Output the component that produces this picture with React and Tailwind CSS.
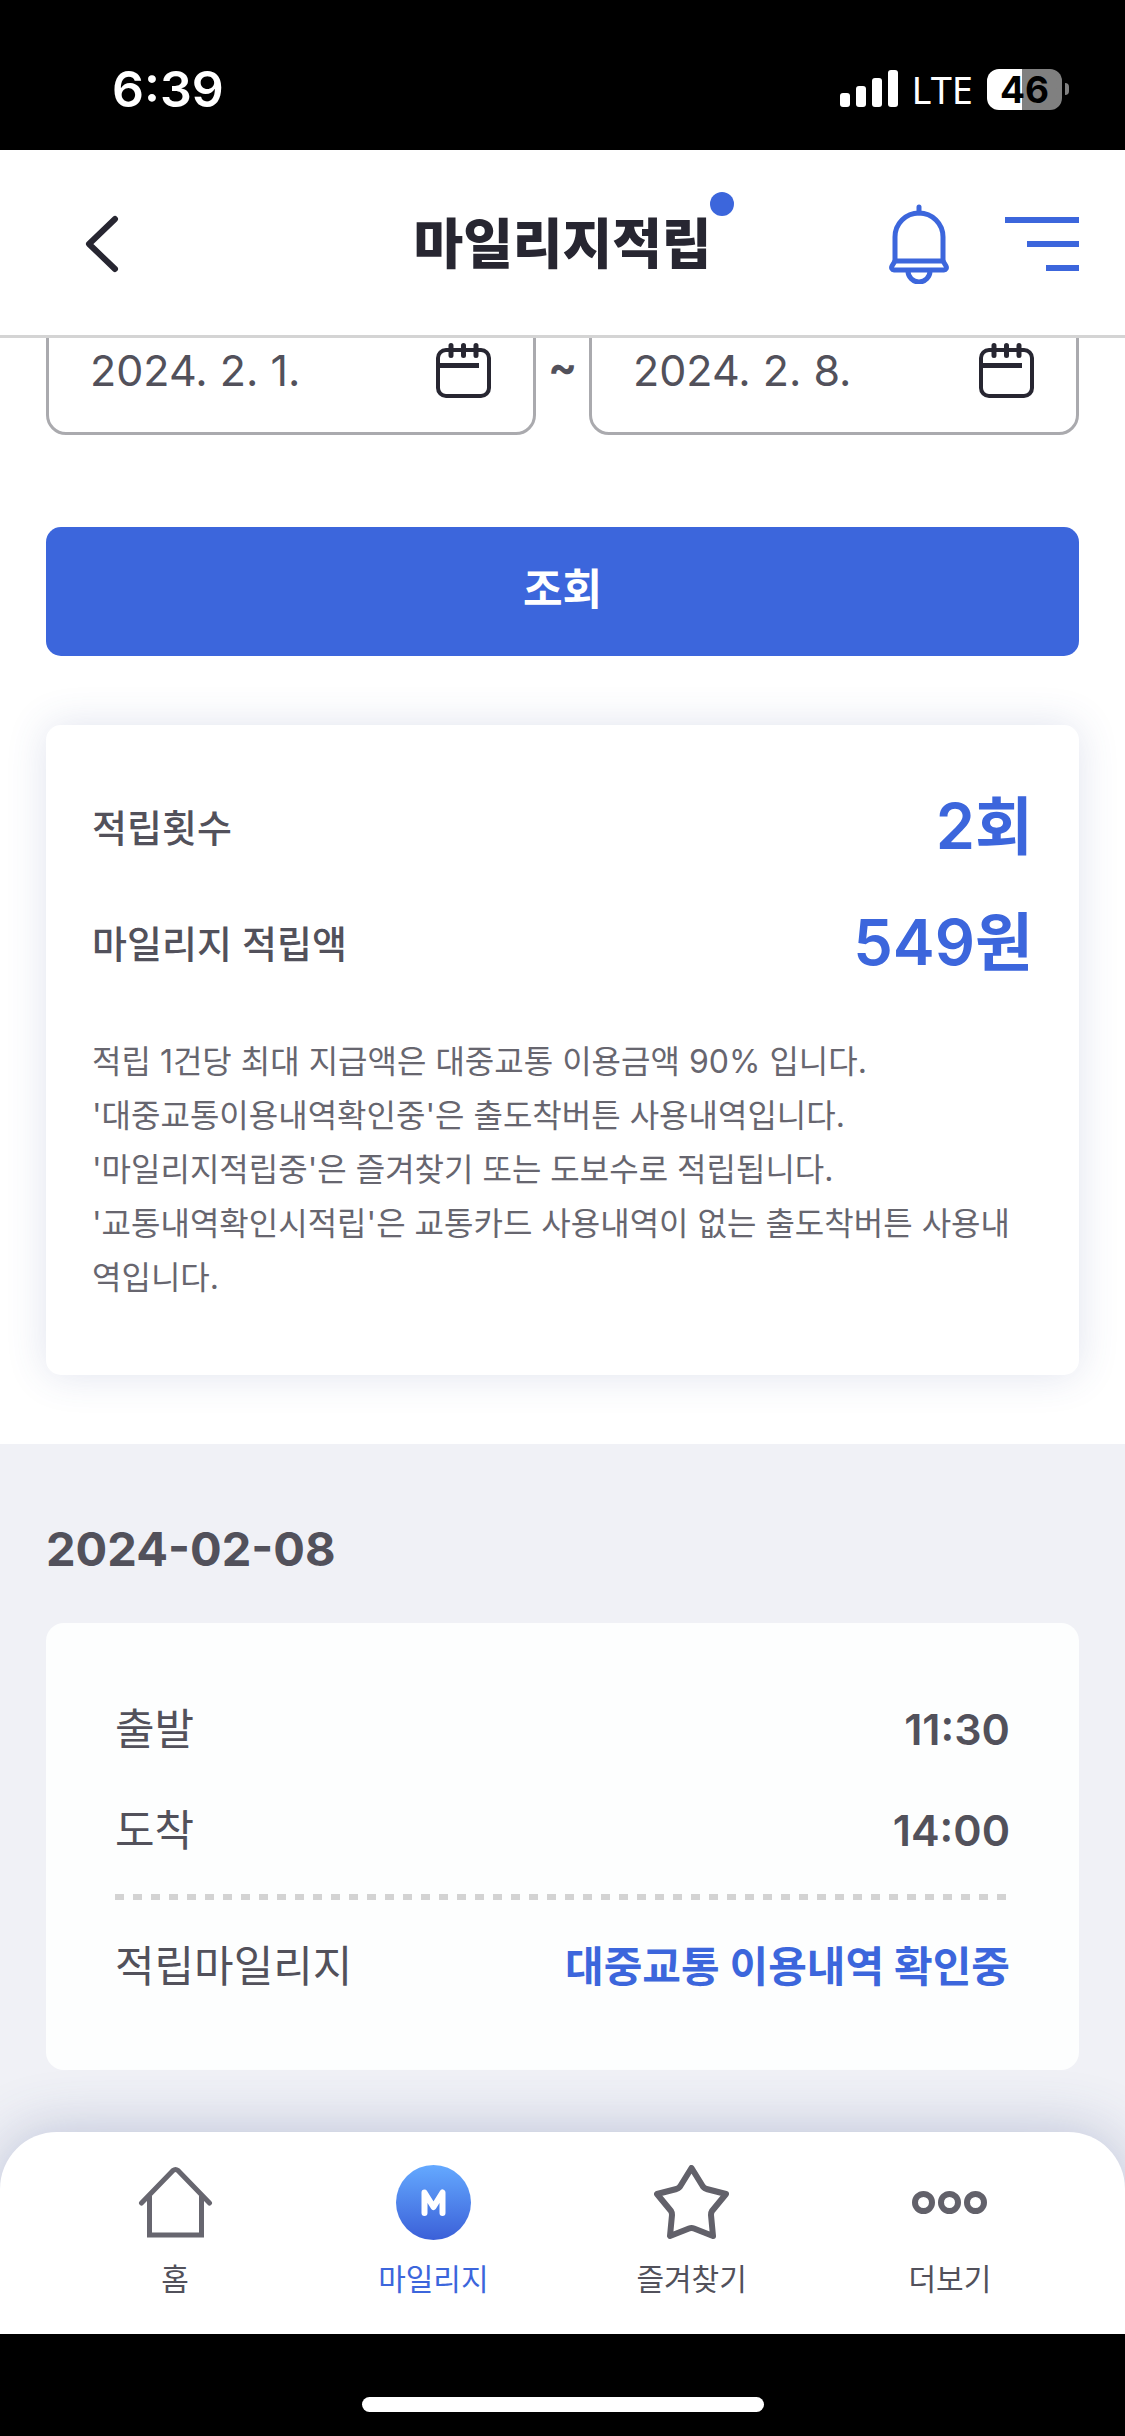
import { useState } from 'react';

const NOTICES = [
  '적립 1건당 최대 지급액은 대중교통 이용금액 90% 입니다.',
  "'대중교통이용내역확인중'은 출도착버튼 사용내역입니다.",
  "'마일리지적립중'은 즐겨찾기 또는 도보수로 적립됩니다.",
  "'교통내역확인시적립'은 교통카드 사용내역이 없는 출도착버튼 사용내역입니다.",
];

const HISTORY = [
  { date: '2024-02-08', departure: '11:30', arrival: '14:00', mileage: '대중교통 이용내역 확인중' },
];

const TABS = [
  { label: '홈', icon: HomeIcon },
  { label: '마일리지', icon: MileageIcon, active: true },
  { label: '즐겨찾기', icon: StarIcon },
  { label: '더보기', icon: MoreIcon },
];

export default function App() {
  const [from, setFrom] = useState('2024. 2. 1.');
  const [to, setTo] = useState('2024. 2. 8.');

  return (
    <div lang="ko" className="flex min-h-screen flex-col bg-white font-['Inter','Noto_Sans_CJK_KR',sans-serif] text-[#52515b]">
      <div className="sticky top-0 z-20">
        <StatusBar />
        <Header title="마일리지적립" />
      </div>

      {/* first row scrolls under the sticky header */}
      <main className="-mt-8 flex flex-1 flex-col">
        <section className="px-[46px] pb-[69px]">
          <form onSubmit={(e) => e.preventDefault()}>
            <div className="flex items-center">
              <DateField label="시작일" value={from} onChange={setFrom} />
              <span className="w-[53px] pb-2 text-center text-[43px] font-bold">~</span>
              <DateField label="종료일" value={to} onChange={setTo} />
            </div>
            <button type="submit" className="mt-[92px] h-[129px] w-full rounded-[15px] bg-[#3c66dc] pb-1 text-[43px] font-bold text-white">
              조회
            </button>
          </form>

          <div className="mt-[69px] rounded-[15px] bg-white px-[46px] pt-[45px] pb-[70px] shadow-[0_0_40px_rgba(60,80,150,0.16)]">
            <dl>
              <SummaryRow label="적립횟수" value="2회" />
              <SummaryRow label="마일리지 적립액" value="549원" />
            </dl>
            <div className="mt-[33px] text-[32px] leading-[54px] text-[#67666f]">
              {NOTICES.map((text) => (
                <p key={text}>{text}</p>
              ))}
            </div>
          </div>
        </section>

        <section className="flex-1 bg-[#f0f1f6] px-[46px] pt-[70px] pb-[120px]">
          {HISTORY.map((item) => (
            <HistoryCard key={item.date} item={item} />
          ))}
        </section>
      </main>

      <BottomNav />
    </div>
  );
}

function StatusBar() {
  return (
    <div className="flex h-[150px] items-center justify-between bg-black pt-7 pr-14 pl-28 text-white">
      <span className="text-[50px] font-semibold">6:39</span>
      <div className="flex items-center gap-[14px]">
        <svg width="58" height="38" viewBox="0 0 58 38" fill="currentColor" aria-hidden="true">
          <rect x="0" y="23" width="10" height="14" rx="3" />
          <rect x="16" y="16" width="10" height="21" rx="3" />
          <rect x="32" y="8" width="10" height="29" rx="3" />
          <rect x="48" y="0" width="10" height="37" rx="3" />
        </svg>
        <span className="font-['Noto_Sans',sans-serif] text-[38px] leading-none">LTE</span>
        <div className="flex items-center gap-[3px]">
          <div className="flex h-[41px] w-[75px] items-center justify-center rounded-xl bg-linear-to-r from-white from-47% to-[#808080] to-47% text-[37px] leading-none font-bold text-black">
            46
          </div>
          <div className="h-3 w-1 rounded-r-full bg-[#808080]" />
        </div>
      </div>
    </div>
  );
}

function Header({ title }) {
  return (
    <header className="grid h-[188px] grid-cols-[1fr_auto_1fr] items-center border-b-[3px] border-[#d4d4d4] bg-white px-[46px] pt-[3px]">
      <button type="button" aria-label="뒤로" className="ml-9 flex w-12 items-center justify-start">
        <svg width="40" height="60" viewBox="0 0 40 60" fill="none" stroke="#272631" strokeWidth="6" strokeLinecap="round" strokeLinejoin="round">
          <path d="M33 5 L7 30 L33 55" />
        </svg>
      </button>
      <h1 className="relative text-[54px] font-black text-[#272631]">
        {title}
        <span className="absolute -top-3 -right-[22px] h-6 w-6 rounded-full bg-[#3c66dc]" />
      </h1>
      <div className="flex items-center justify-end gap-[56px] text-[#3c66dc]">
        <button type="button" aria-label="알림">
          <BellIcon />
        </button>
        <button type="button" aria-label="메뉴">
          <svg width="74" height="54" viewBox="0 0 74 54" fill="currentColor">
            <path d="M0 0h74v6H0zM22 24h52v6H22zM41 48h33v6H41z" />
          </svg>
        </button>
      </div>
    </header>
  );
}

function DateField({ label, value, onChange }) {
  return (
    <div className="flex h-[129px] min-w-0 flex-1 items-center rounded-[20px] border-[3px] border-[#aaaaae] px-[41px]">
      <input
        type="text"
        aria-label={label}
        value={value}
        onChange={(e) => onChange(e.target.value)}
        className="min-w-0 flex-1 text-[43px] outline-none"
      />
      <button type="button" aria-label={`${label} 선택`}>
        <CalendarIcon />
      </button>
    </div>
  );
}

function SummaryRow({ label, value }) {
  return (
    <div className="flex h-[116px] items-center justify-between">
      <dt className="text-[38px] font-medium">{label}</dt>
      <dd className="pb-1 text-[63px] font-semibold text-[#3c66dc]">{value}</dd>
    </div>
  );
}

function HistoryCard({ item }) {
  return (
    <article>
      <h2 className="text-[47px] leading-[70px] font-bold">{item.date}</h2>
      <dl className="mt-[39px] rounded-[18px] bg-[#fdfefe] px-[69px] pt-[56px] pb-[53px] text-[43px]">
        <HistoryRow label="출발" value={item.departure} />
        <HistoryRow label="도착" value={item.arrival} />
        <div className="mt-[13px] mb-[16px] h-[6px] bg-[repeating-linear-gradient(90deg,#d3d3d3_0_9px,transparent_9px_18px)]" />
        <HistoryRow label="적립마일리지" value={item.mileage} highlight />
      </dl>
    </article>
  );
}

function HistoryRow({ label, value, highlight = false }) {
  return (
    <div className="flex h-[101px] items-center justify-between">
      <dt>{label}</dt>
      <dd className={highlight ? 'text-[42px] font-bold text-[#3c66dc]' : 'font-semibold'}>{value}</dd>
    </div>
  );
}

function BottomNav() {
  return (
    <div className="sticky bottom-0 z-10 -mt-[60px]">
      <nav className="grid h-[202px] grid-cols-4 rounded-t-[57px] bg-white px-[46px] pt-[33px] shadow-[0_0_60px_rgba(60,80,140,0.3)]">
        {TABS.map(({ label, icon: Icon, active }) => (
          <a
            key={label}
            href="#"
            aria-current={active ? 'page' : undefined}
            className={`flex flex-col items-center gap-4 text-[30px] leading-[46px] ${active ? 'text-[#3c66dc]' : 'text-[#52515b]'}`}
          >
            <Icon />
            {label}
          </a>
        ))}
      </nav>
      <div className="flex h-[102px] items-end justify-center bg-black pb-6">
        <div className="h-[15px] w-[402px] rounded-full bg-white" />
      </div>
    </div>
  );
}

function BellIcon() {
  return (
    <svg width="60" height="80" viewBox="0 0 60 80" fill="none" stroke="currentColor" strokeWidth="5" strokeLinecap="round" strokeLinejoin="round">
      <path d="M30 3v6" />
      <path d="M6 57V33a24 24 0 0 1 48 0v24" />
      <path d="M6 57h48l3 5c1 2 0 4-2 4H5c-2 0-3-2-2-4z" />
      <path d="M19 67a11 11 0 0 0 22 0" />
    </svg>
  );
}

function CalendarIcon() {
  return (
    <svg width="56" height="56" viewBox="0 0 56 56" fill="none" stroke="#272631" strokeWidth="4">
      <rect x="2" y="7" width="51" height="46" rx="8" />
      <path d="M3 22.500h40" strokeWidth="5" />
      <path d="M15 2.500v10M27.500 2.500v10M40 2.500v10" strokeWidth="5" strokeLinecap="round" />
    </svg>
  );
}

function HomeIcon() {
  return (
    <svg width="75" height="75" viewBox="0 0 75 75" fill="none" stroke="#67666f" strokeWidth="5">
      <path d="M3.500 38 L35 5.500 Q37.500 3.500 40 5.500 L71.500 38" strokeLinecap="round" strokeLinejoin="round" />
      <path d="M11.500 31v39h52V31" />
    </svg>
  );
}

function MileageIcon() {
  return (
    <svg width="75" height="75" viewBox="0 0 75 75" fill="none">
      <defs>
        <linearGradient id="mileage" x1="0" y1="0" x2="0" y2="1">
          <stop offset="0" stopColor="#64a9ff" />
          <stop offset="1" stopColor="#3b60d8" />
        </linearGradient>
      </defs>
      <circle cx="37.500" cy="37.500" r="37.500" fill="url(#mileage)" />
      <path d="M28.500 48V27.500L37.500 42l9-14.500V48" stroke="#fff" strokeWidth="6" strokeLinecap="round" strokeLinejoin="round" />
    </svg>
  );
}

function StarIcon() {
  return (
    <svg width="75" height="75" viewBox="0 0 75 75" fill="none" stroke="#62616a" strokeWidth="6" strokeLinejoin="round">
      <path d="M37.500 3L48 20Q49.500 23 52.500 24L72 29L58 46Q57 47.500 57 50L59 71L40 63.500Q37.500 62.500 35 63.500L16 71L18 50Q18 47.500 17 46L3 29L22.500 24Q25.500 23 27 20Z" />
    </svg>
  );
}

function MoreIcon() {
  return (
    <svg width="75" height="75" viewBox="0 0 75 75" fill="none" stroke="#62616a" strokeWidth="6">
      <circle cx="11.500" cy="37.500" r="8.500" />
      <circle cx="37.500" cy="37.500" r="8.500" />
      <circle cx="63.500" cy="37.500" r="8.500" />
    </svg>
  );
}
